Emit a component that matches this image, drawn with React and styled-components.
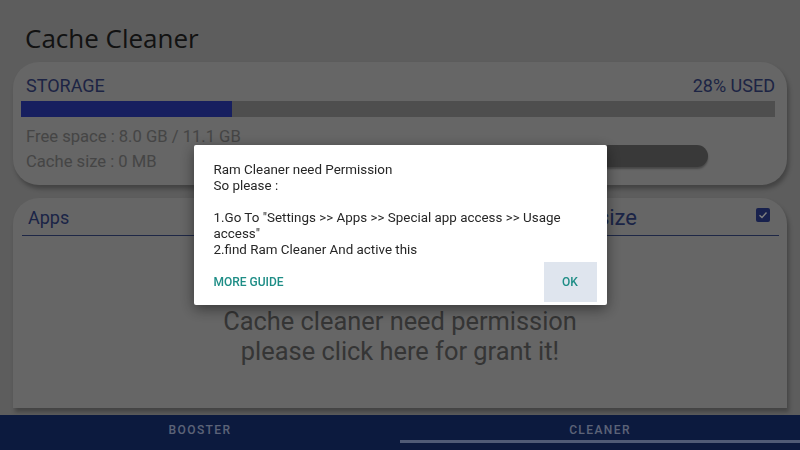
import React from 'react';
import styled, { createGlobalStyle } from 'styled-components';

const Global = createGlobalStyle`
  html, body {
    margin: 0;
    padding: 0;
    height: 100%;
  }
  body {
    font-family: Roboto, "Liberation Sans", sans-serif;
    background: #bababa;
    overflow: hidden;
  }
`;

const Page = styled.div`
  height: 100vh;
  display: flex;
  flex-direction: column;
  background: #bababa;
`;

const Title = styled.h1`
  margin: 20px 0 0;
  padding-left: 25px;
  font-family: "Open Sans", "Liberation Sans", sans-serif;
  font-weight: 400;
  font-size: 26px;
  line-height: 36px;
  color: #242424;
`;

const Card = styled.section`
  margin: ${p => p.$top}px 13px ${p => p.$bottom || 0}px;
  background: #cccccc;
  border-radius: ${p => p.$flatBottom ? '26px 26px 0 0' : '26px'};
  box-shadow: 2px 4px 4px rgba(0, 0, 0, 0.28);
  ${p => p.$grow && 'flex: 1; display: flex; flex-direction: column;'}
`;

const Storage = styled(Card)`
  padding: 13px 12px 11px 8px;
`;

const StorageHead = styled.div`
  display: flex;
  justify-content: space-between;
  padding-left: 5px;
  font-size: 18px;
  line-height: 22px;
  color: #3a4888;
`;

const Track = styled.div`
  margin-top: 4px;
  height: 16px;
  background: #9c9c9c;
`;

const Fill = styled.div`
  height: 100%;
  background: #2e3ebe;
`;

const InfoRow = styled.div`
  display: flex;
  margin-top: 7px;
`;

const InfoLines = styled.div`
  padding-left: 5px;
  font-size: 16.6px;
  line-height: 25px;
  color: #8a8a8a;
`;

const CleanButton = styled.button`
  align-self: flex-end;
  margin: 0 67px 7px auto;
  width: 288px;
  height: 22px;
  border: none;
  border-radius: 11px;
  background: #727272;
  box-shadow: 0 2px 2px rgba(0, 0, 0, 0.3);
  color: #f0f0f0;
  font: 500 12px Roboto, sans-serif;
`;

const AppsHead = styled.div`
  display: flex;
  align-items: center;
  margin: 9px 8px 0 9px;
  padding: 0 9px 6px 6px;
  border-bottom: 1px solid #3c4f8c;
`;

const AppsLabel = styled.div`
  flex: 1;
  font-size: 18px;
  line-height: 22px;
  color: #36498c;
`;

const SizeLabel = styled.div`
  margin-right: 119px;
  font-size: 22px;
  line-height: 22px;
  color: #36498c;
`;

const Check = styled.span`
  display: flex;
  align-items: center;
  justify-content: center;
  width: 14px;
  height: 14px;
  margin-bottom: 6px;
  border-radius: 2px;
  background: #31439a;
`;

const Message = styled.div`
  padding-top: 70px;
  text-align: center;
  font-size: 25.4px;
  line-height: 30px;
  color: #6a6a6a;
`;

const Nav = styled.nav`
  display: grid;
  grid-template-columns: 1fr 1fr;
  height: 35px;
  background: #18347c;
`;

const Tab = styled.div`
  display: flex;
  flex-direction: column;
  align-items: center;
  padding-top: 7px;
  font-size: 12px;
  font-weight: 500;
  line-height: 16px;
  letter-spacing: 1.4px;
  color: #b8c6ee;

  &::after {
    content: '';
    align-self: stretch;
    height: 3px;
    margin-top: 2px;
    background: ${p => p.$active ? '#a0b6ec' : 'transparent'};
  }
`;

const Scrim = styled.div`
  position: fixed;
  inset: 0;
  display: flex;
  align-items: center;
  justify-content: center;
  background: rgba(0, 0, 0, 0.5);
`;

const Dialog = styled.div`
  width: 413px;
  background: #ffffff;
  border-radius: 2px;
  box-shadow: 0 4px 14px rgba(0, 0, 0, 0.45);
`;

const DialogText = styled.p`
  margin: 0;
  padding: 17px 20px 0;
  font-size: 13.4px;
  line-height: 16px;
  color: #262626;
`;

const Actions = styled.div`
  display: flex;
  align-items: center;
  justify-content: space-between;
  margin-top: 4px;
  padding: 0 10px 3px 20px;
`;

const TextButton = styled.button`
  border: none;
  padding: 0;
  width: ${p => p.$boxed ? '53px' : 'auto'};
  height: ${p => p.$boxed ? '40px' : 'auto'};
  background: ${p => p.$boxed ? '#dfe5ee' : 'transparent'};
  color: #1e8d86;
  font: 500 12px Roboto, "Liberation Sans", sans-serif;
`;

export default function App() {
  const used = 28;
  return (
    <>
      <Global />
      <Page>
        <Title>Cache Cleaner</Title>
        <Storage $top={6}>
          <StorageHead>
            <span>STORAGE</span>
            <span>{used}% USED</span>
          </StorageHead>
          <Track>
            <Fill style={{ width: `${used}%` }} />
          </Track>
          <InfoRow>
            <InfoLines>
              <div>Free space : 8.0 GB / 11.1 GB</div>
              <div>Cache size : 0 MB</div>
            </InfoLines>
            <CleanButton>CLEAN</CleanButton>
          </InfoRow>
        </Storage>
        <Card $top={13} $bottom={7} $grow $flatBottom>
          <AppsHead>
            <AppsLabel>Apps</AppsLabel>
            <SizeLabel>Cache size</SizeLabel>
            <Check>
              <svg width="10" height="10" viewBox="0 0 10 10">
                <polyline points="1.5,5.2 4,7.5 8.5,2.5" fill="none" stroke="#ffffff" strokeWidth="1.4" />
              </svg>
            </Check>
          </AppsHead>
          <Message>
            Cache cleaner need permission<br />
            please click here for grant it!
          </Message>
        </Card>
        <Nav>
          <Tab>BOOSTER</Tab>
          <Tab $active>CLEANER</Tab>
        </Nav>
      </Page>
      <Scrim>
        <Dialog>
          <DialogText>
            Ram Cleaner need Permission<br />
            So please :<br />
            <br />
            1.Go To "Settings &gt;&gt; Apps &gt;&gt; Special app access &gt;&gt; Usage access"<br />
            2.find Ram Cleaner And active this
          </DialogText>
          <Actions>
            <TextButton>MORE GUIDE</TextButton>
            <TextButton $boxed>OK</TextButton>
          </Actions>
        </Dialog>
      </Scrim>
    </>
  );
}
